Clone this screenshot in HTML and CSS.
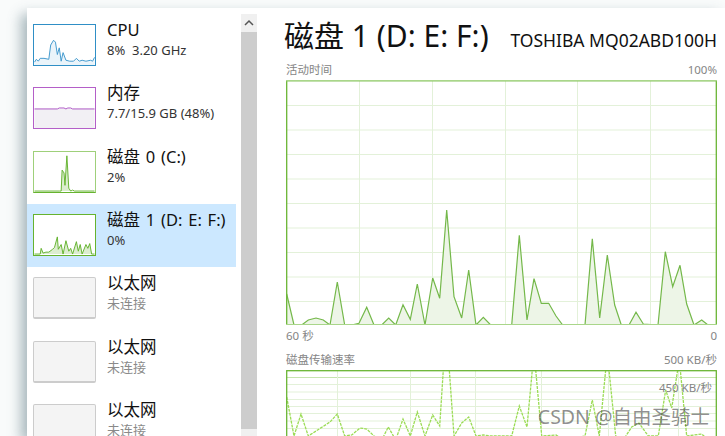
FILE: index.html
```html
<!DOCTYPE html>
<html lang="zh-CN">
<head>
    <meta charset="UTF-8">
    <title>磁盘 1</title>
    <link rel="stylesheet" href="styles.css">
</head>
<body>
    <div class="page">
        <div class="window">
            <ul class="list">
                <li class="item">
                    <svg class="thumb cpu" viewBox="0 0 63 42">
                        <polygon class="cpu-fill" points="0,42 0,39 2,36 4,38 6,35 10,35 15,36 17,21 20,16 22,18 24,31 26,24 28,38 30,29 33,37 37,38 41,38 44,35 47,38 50,37 54,38 59,37 61,38 63,34 63,42"/>
                        <polyline class="cpu-line" points="0,39 2,36 4,38 6,35 10,35 15,36 17,21 20,16 22,18 24,31 26,24 28,38 30,29 33,37 37,38 41,38 44,35 47,38 50,37 54,38 59,37 61,38 63,34"/>
                    </svg>
                    <div class="info">
                        <div class="name">CPU</div>
                        <div class="sub">8%&nbsp; 3.20 GHz</div>
                    </div>
                </li>
                <li class="item">
                    <svg class="thumb mem" viewBox="0 0 63 42">
                        <polygon class="mem-fill" points="0,42 0,22 63,22 63,42"/>
                        <polyline class="mem-line" points="0,22 24,22 26,21 31,21 33,22 35,21 38,21 40,22 63,22"/>
                    </svg>
                    <div class="info">
                        <div class="name">内存</div>
                        <div class="sub">7.7/15.9 GB (48%)</div>
                    </div>
                </li>
                <li class="item">
                    <svg class="thumb disk light" viewBox="0 0 63 42">
                        <polygon class="disk-fill" points="26,41 28,41 29,19 31,22 32,35 34,4 36,38 38,41"/>
                        <polyline class="disk-line" points="0,41 26,41 28,41 29,19 31,22 32,35 34,4 36,38 38,41 40,40 42,41 63,41"/>
                    </svg>
                    <div class="info">
                        <div class="name">磁盘 0 (C:)</div>
                        <div class="sub">2%</div>
                    </div>
                </li>
                <li class="item selected">
                    <svg class="thumb disk" viewBox="0 0 63 42">
                        <polygon class="disk-fill" points="0,41 6,41 7,35 9,40 12,39 15,39 19,36 21,34 24,23 25,36 28,31 30,41 33,27 36,38 38,35 40,41 44,28 46,38 48,31 50,41 54,31 56,35 58,30 60,41 63,41"/>
                        <polyline class="disk-line" points="0,41 6,41 7,35 9,40 12,39 15,39 19,36 21,34 24,23 25,36 28,31 30,41 33,27 36,38 38,35 40,41 44,28 46,38 48,31 50,41 54,31 56,35 58,30 60,41 63,41"/>
                    </svg>
                    <div class="info">
                        <div class="name">磁盘 1 (D: E: F:)</div>
                        <div class="sub">0%</div>
                    </div>
                </li>
                <li class="item">
                    <div class="thumb empty"></div>
                    <div class="info">
                        <div class="name">以太网</div>
                        <div class="sub off">未连接</div>
                    </div>
                </li>
                <li class="item">
                    <div class="thumb empty"></div>
                    <div class="info">
                        <div class="name">以太网</div>
                        <div class="sub off">未连接</div>
                    </div>
                </li>
                <li class="item">
                    <div class="thumb empty"></div>
                    <div class="info">
                        <div class="name">以太网</div>
                        <div class="sub off">未连接</div>
                    </div>
                </li>
            </ul>

            <div class="scrollbar">
                <div class="arrow">
                    <svg viewBox="0 0 16 18" width="16" height="18"><polyline points="4,11 8,7 12,11"/></svg>
                </div>
                <div class="bar"></div>
                <div class="rest"></div>
            </div>

            <div class="main">
                <div class="head">
                    <span class="title">磁盘 1 (D: E: F:)</span>
                    <span class="model">TOSHIBA MQ02ABD100H</span>
                </div>

                <div class="labels first"><span>活动时间</span><span>100%</span></div>
                <svg class="chart big" viewBox="286 80 431 245">
                    <g class="grid">
                        <line x1="286" x2="717" y1="105.5" y2="105.5"/>
                        <line x1="286" x2="717" y1="130" y2="130"/>
                        <line x1="286" x2="717" y1="154.5" y2="154.5"/>
                        <line x1="286" x2="717" y1="179" y2="179"/>
                        <line x1="286" x2="717" y1="203.5" y2="203.5"/>
                        <line x1="286" x2="717" y1="228" y2="228"/>
                        <line x1="286" x2="717" y1="252.5" y2="252.5"/>
                        <line x1="286" x2="717" y1="277" y2="277"/>
                        <line x1="286" x2="717" y1="301.5" y2="301.5"/>
                        <line y1="80" y2="325" x1="359.5" x2="359.5"/>
                        <line y1="80" y2="325" x1="432.5" x2="432.5"/>
                        <line y1="80" y2="325" x1="505.5" x2="505.5"/>
                        <line y1="80" y2="325" x1="577.5" x2="577.5"/>
                        <line y1="80" y2="325" x1="650.5" x2="650.5"/>
                    </g>
                    <polygon class="area" points="286.7,325 286.7,294 294,325 301.7,325 308.3,320 316,318 323.3,320 330,325 337.3,282 344.7,325 351.7,325 359,323.3 366.7,307.3 374,325 381.7,325 388.7,318 395.7,325 403,304.7 410.3,319.3 417.3,284 425,325 432.7,278 439.7,298.3 446.7,210 454,296.7 461.7,318 468.7,270 476,325 483.3,317.3 490.7,325 511.7,325 519.3,235.3 527,320 534,278.7 541.3,303.3 548.7,303.3 556,316 562.7,325 585,325 592.3,238.7 599.7,318 607.3,255 614.7,305 621.3,325 629,325 636,312.3 643.3,324 658,325 665.3,251.7 672.7,286.7 680,265.3 686.7,304 694,325 701.7,320 708,325"/>
                    <polyline class="trace" points="286.7,294 294,325 301.7,325 308.3,320 316,318 323.3,320 330,325 337.3,282 344.7,325 351.7,325 359,323.3 366.7,307.3 374,325 381.7,325 388.7,318 395.7,325 403,304.7 410.3,319.3 417.3,284 425,325 432.7,278 439.7,298.3 446.7,210 454,296.7 461.7,318 468.7,270 476,325 483.3,317.3 490.7,325 511.7,325 519.3,235.3 527,320 534,278.7 541.3,303.3 548.7,303.3 556,316 562.7,325 585,325 592.3,238.7 599.7,318 607.3,255 614.7,305 621.3,325 629,325 636,312.3 643.3,324 658,325 665.3,251.7 672.7,286.7 680,265.3 686.7,304 694,325 701.7,320 708,325"/>
                    <rect class="frame" x="286.7" y="80.7" width="429.6" height="244"/>
                    <line class="edge" x1="286" x2="717" y1="80.7" y2="80.7"/>
                    <line class="edge" x1="286" x2="717" y1="324.7" y2="324.7"/>
                </svg>
                <div class="labels second"><span>60 秒</span><span>0</span></div>

                <div class="labels third"><span>磁盘传输速率</span><span>500 KB/秒</span></div>
                <div class="rate">
                    <svg class="chart small" viewBox="286 370 431 66">
                        <g class="grid">
                            <line class="top-line" x1="286" x2="717" y1="377.5" y2="377.5"/>
                            <line x1="286" x2="717" y1="384.5" y2="384.5"/>
                            <line x1="286" x2="717" y1="392" y2="392"/>
                            <line x1="286" x2="717" y1="399.5" y2="399.5"/>
                            <line x1="286" x2="717" y1="406.5" y2="406.5"/>
                            <line x1="286" x2="717" y1="413.5" y2="413.5"/>
                            <line x1="286" x2="717" y1="421" y2="421"/>
                            <line x1="286" x2="717" y1="428.5" y2="428.5"/>
                            <line y1="370" y2="436" x1="337.5" x2="337.5"/>
                            <line y1="370" y2="436" x1="410.5" x2="410.5"/>
                            <line y1="370" y2="436" x1="475.5" x2="475.5"/>
                            <line y1="370" y2="436" x1="541.5" x2="541.5"/>
                            <line y1="370" y2="436" x1="608.5" x2="608.5"/>
                            <line y1="370" y2="436" x1="678.5" x2="678.5"/>
                        </g>
                        <polyline class="trace-dash" points="286.7,397 294,436 301,414 308.3,436 330,422 337.3,414 344.7,436 351.7,435 360,428 366.7,429 374,436 381.7,440 388.3,427 395.7,440 403,419 410.3,436 417.3,412 425,436 432.7,415 439.7,426 443.3,370 449.3,370 454,436 461.7,423 468.7,417 476,436 483.3,435 490.7,436 511.7,436 519.3,406 527,427 532.3,370 535.7,370 541.7,436 556,435 563.3,440 585,436 592.3,400 599.3,436 605.7,370 609,370 615.7,436 623.3,440 631.7,427 639,423 648.3,436 658.3,436 665.7,390 671.7,408 677.7,370 680.3,370 686.7,436 701.7,434 708.3,440"/>
                        <rect class="frame" x="286.7" y="370.7" width="429.6" height="80"/>
                    </svg>
                    <span class="scale">450 KB/秒</span>
                </div>
            </div>
        </div>
        <div class="mark">CSDN @自由圣骑士</div>
    </div>
</body>
</html>
```

FILE: styles.css
```css
* {
    margin: 0;
    padding: 0;
    box-sizing: border-box;
}
body {
    background: #fff;
    font-family: "Noto Sans", "Noto Sans CJK SC", sans-serif;
    color: #222;
}
.page {
    position: relative;
    width: 725px;
    height: 436px;
    overflow: hidden;
    background: #f9fbfb;
}
.window {
    display: flex;
    height: 428px;
    margin: 8px 0 0 27px;
    background: #fff;
    box-shadow: -6px 6px 12px rgba(70, 105, 115, .45);
}

/* left list */
.list {
    list-style: none;
    width: 209px;
    padding-top: 6px;
    flex-shrink: 0;
}
.item {
    display: flex;
    height: 63.33px;
    padding: 10px 0 0 6px;
    gap: 11px;
}
.item.selected {
    background: #cce8ff;
}
.thumb {
    display: block;
    width: 63px;
    height: 42px;
    flex-shrink: 0;
    background: #fff;
    border: 1px solid #ccc;
}
.thumb.cpu {
    border-color: #2f8fc6;
}
.thumb.mem {
    border-color: #b45fc8;
}
.thumb.disk {
    border-color: #66b32e;
}
.thumb.light {
    border-top-color: #9fd07a;
    border-left-color: #9fd07a;
    border-right-color: #9fd07a;
}
.thumb.empty {
    background: #f4f4f4;
    border-bottom-width: 2px;
    border-radius: 2px;
}
.thumb polyline {
    fill: none;
    stroke-width: 1;
}
.cpu-fill {
    fill: #eaf4fa;
}
.cpu-line {
    stroke: #3d97cc;
}
.mem-fill {
    fill: #f2f0f4;
}
.mem-line {
    stroke: #a94fc2;
}
.disk-fill {
    fill: #dcedcf;
}
.disk-line {
    stroke: #62b22c;
}
.info {
    margin-top: -4px;
}
.name {
    font-size: 16.5px;
    line-height: 20px;
    word-spacing: 1.5px;
    color: #111;
    white-space: nowrap;
}
.sub {
    font-size: 13px;
    line-height: 20px;
    color: #333;
    white-space: nowrap;
}
.sub.off {
    color: #8a8a8a;
}

/* scrollbar */
.scrollbar {
    display: flex;
    flex-direction: column;
    width: 16px;
    margin: 6px 0 0 5px;
    flex-shrink: 0;
}
.arrow {
    height: 18px;
    background: #f0f0f0;
}
.arrow svg {
    display: block;
}
.arrow polyline {
    fill: none;
    stroke: #555;
    stroke-width: 1.5;
}
.bar {
    height: 397px;
    background: #cdcdcd;
}
.rest {
    flex: 1;
    background: #f0f0f0;
}

/* main panel */
.main {
    width: 468px;
    padding-left: 27px;
    flex-shrink: 0;
}
.head {
    display: flex;
    align-items: baseline;
    justify-content: space-between;
    height: 50px;
    padding: 9px 8px 0 0;
    white-space: nowrap;
}
.title {
    font-size: 30px;
    line-height: 38px;
    color: #111;
}
.model {
    font-size: 17.5px;
    color: #111;
}
.labels {
    display: flex;
    justify-content: space-between;
    margin: 0 8px 0 2px;
    font-size: 11.5px;
    color: #858585;
}
.labels.first {
    height: 22px;
    line-height: 24px;
}
.labels.second {
    height: 23px;
    line-height: 22px;
}
.labels.third {
    height: 22px;
    line-height: 23px;
}
.chart {
    display: block;
    margin-left: 2px;
}
.chart.big {
    width: 431px;
    height: 245px;
}
.chart.small {
    width: 431px;
    height: 66px;
}
.grid line {
    stroke: #e3f1d9;
    stroke-width: 1;
}
.grid .top-line {
    stroke: #c6e4ae;
}
.area {
    fill: #edf5e7;
}
.trace {
    fill: none;
    stroke: #74b84a;
    stroke-width: 1.2;
}
.trace-dash {
    fill: none;
    stroke: #9bdc55;
    stroke-width: 1.3;
    stroke-dasharray: 3 1;
}
.frame {
    fill: none;
    stroke: #6ab534;
    stroke-width: 1.3;
}
.edge {
    stroke: #a9d68a;
    stroke-width: 1.3;
}
.rate {
    position: relative;
}
.scale {
    position: absolute;
    top: 9px;
    right: 13px;
    font-size: 11.5px;
    color: #858585;
}
.mark {
    position: absolute;
    right: 15px;
    bottom: 6px;
    font-size: 19.5px;
    color: rgba(80, 80, 80, .65);
    white-space: nowrap;
}
```
